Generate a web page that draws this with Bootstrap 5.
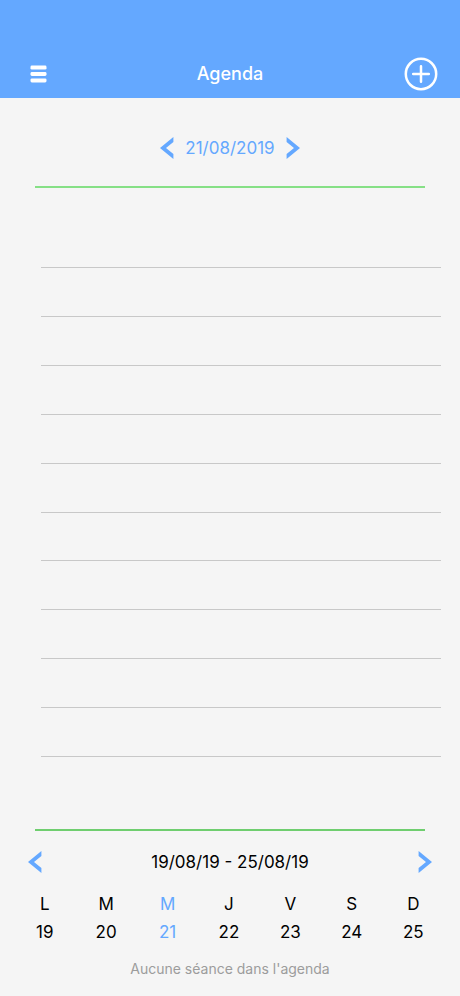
<!DOCTYPE html>
<html lang="fr">
<head>
<meta charset="utf-8">
<meta name="viewport" content="width=device-width, initial-scale=1">
<title>Agenda</title>
<link href="https://cdn.jsdelivr.net/npm/bootstrap@5.3.0/dist/css/bootstrap.min.css" rel="stylesheet">
<style>
  :root { --sky: #64a8ff; }
  body { background: #f5f5f5; color: #000; font-family: Inter, "Liberation Sans", sans-serif; font-size: 17px; line-height: 28px; }
  svg { display: block; }
  .top-bar { background: var(--sky); padding: 49px 22px 0; height: 98px; }
  .side { flex: 1 1 0; }
  .top-title { font-size: 18px; line-height: 28px; font-weight: 500; }
  .plain { background: none; border: 0; padding: 0; color: inherit; }
  .menu-btn { padding-left: 8px; }
  .sky { color: var(--sky); }
  .day-nav { padding-top: 36px; gap: 11px; }
  .day-nav + .green-line { margin-top: 24px; }
  .green-line { height: 2px; background: #86e086; margin: 0 35px; }
  .green-line.thin { background: #6fce6f; }
  .slots { margin: 79px 19px 72px 41px; border-top: 1px solid #c8c8c8; }
  .slot { border-bottom: 1px solid #c8c8c8; min-height: 24px; flex: 1 1 0; }
  .week-nav { padding: 17px 28px 0; }
  .week-table { table-layout: fixed; margin-top: 14px; }
  .week-box { padding: 0 16px 0 14px; }
  .week-table th, .week-table td { padding: 0; font-weight: 400; }
  .note { font-size: 14px; line-height: 20px; color: #9c9c9c; padding: 13px 0 17px; }
</style>
</head>
<body>
<div class="d-flex flex-column min-vh-100">
  <header class="top-bar d-flex align-items-center text-white">
    <div class="side d-flex">
      <button class="plain menu-btn" type="button" aria-label="Menu">
        <svg width="17" height="18" viewBox="0 0 17 18" fill="currentColor"><rect x=".5" y=".6" width="16" height="4" rx="1.4"/><rect x=".5" y="7" width="16" height="4" rx="1.4"/><rect x=".5" y="13.4" width="16" height="4" rx="1.4"/></svg>
      </button>
    </div>
    <h1 class="top-title m-0">Agenda</h1>
    <div class="side d-flex justify-content-end">
      <button class="plain" type="button" aria-label="Ajouter">
        <svg width="34" height="34" viewBox="0 0 34 34" fill="none" stroke="currentColor" stroke-width="2.5" stroke-linecap="round"><circle cx="17" cy="17" r="15.2"/><path d="M17 9.2v15.6M9.2 17h15.6"/></svg>
      </button>
    </div>
  </header>

  <main class="d-flex flex-column flex-grow-1">
    <nav class="day-nav sky d-flex justify-content-center align-items-center" aria-label="Jour">
      <button class="plain" type="button" aria-label="Jour précédent"><svg width="14" height="22" viewBox="0 0 14 22" fill="currentColor"><path d="M0 11 13.4 0v5L6 11l7.4 6v5z"/></svg></button>
      <span>21/08/2019</span>
      <button class="plain" type="button" aria-label="Jour suivant"><svg width="14" height="22" viewBox="0 0 14 22" fill="currentColor"><path d="M14 11 .6 0v5L8 11 .6 17v5z"/></svg></button>
    </nav>
    <div class="green-line"></div>

    <div class="slots d-flex flex-column flex-grow-1">
      <div class="slot"></div><div class="slot"></div><div class="slot"></div><div class="slot"></div><div class="slot"></div>
      <div class="slot"></div><div class="slot"></div><div class="slot"></div><div class="slot"></div><div class="slot"></div>
    </div>

    <div class="green-line thin"></div>
    <nav class="week-nav d-flex justify-content-between align-items-center" aria-label="Semaine">
      <button class="plain sky" type="button" aria-label="Semaine précédente"><svg width="14" height="22" viewBox="0 0 14 22" fill="currentColor"><path d="M0 11 13.4 0v5L6 11l7.4 6v5z"/></svg></button>
      <span>19/08/19 - 25/08/19</span>
      <button class="plain sky" type="button" aria-label="Semaine suivante"><svg width="14" height="22" viewBox="0 0 14 22" fill="currentColor"><path d="M14 11 .6 0v5L8 11 .6 17v5z"/></svg></button>
    </nav>
    <div class="week-box">
      <table class="week-table w-100 text-center">
        <thead><tr><th scope="col">L</th><th scope="col">M</th><th scope="col" class="sky">M</th><th scope="col">J</th><th scope="col">V</th><th scope="col">S</th><th scope="col">D</th></tr></thead>
        <tbody><tr><td>19</td><td>20</td><td class="sky">21</td><td>22</td><td>23</td><td>24</td><td>25</td></tr></tbody>
      </table>
    </div>
    <p class="note text-center m-0">Aucune séance dans l'agenda</p>
  </main>
</div>
<script src="https://cdn.jsdelivr.net/npm/bootstrap@5.3.0/dist/js/bootstrap.bundle.min.js"></script>
</body>
</html>
